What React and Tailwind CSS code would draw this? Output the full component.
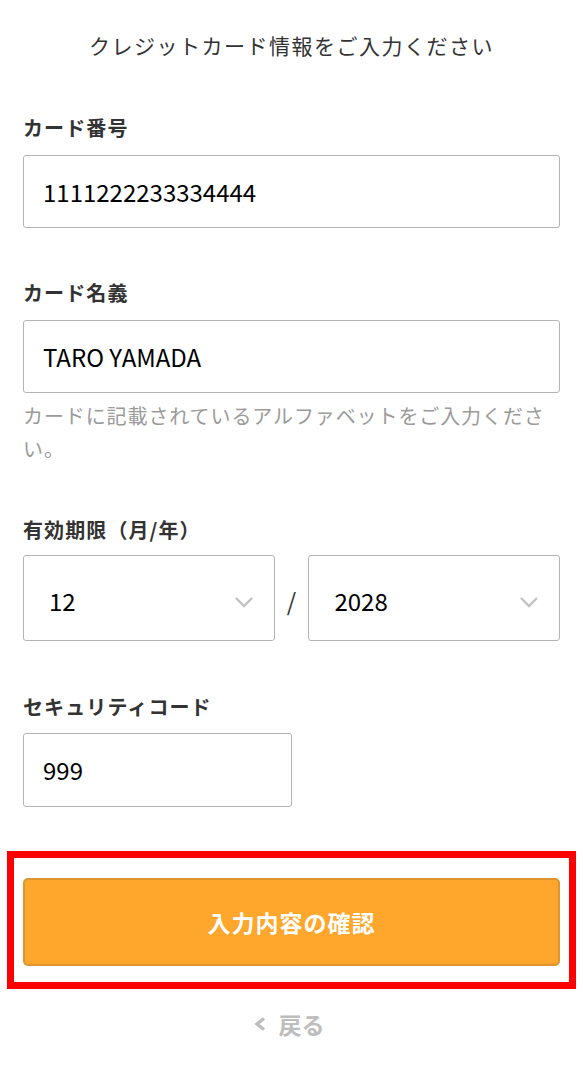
import React from "react";

const font = { fontFamily: '"Noto Sans CJK JP", "Noto Sans", sans-serif' };

function Chevron() {
  return (
    <svg width="20" height="12" viewBox="0 0 20 12" fill="none" className="shrink-0">
      <path d="M2 2 L10 10 L18 2" stroke="#c2c2c2" strokeWidth="2.4" />
    </svg>
  );
}

function Label({ children }) {
  return (
    <div className="text-[20px] leading-[30px] font-bold text-[#333] tracking-[1.1px]">{children}</div>
  );
}

function Box({ children, className = "" }) {
  return (
    <div
      className={
        "flex items-center border border-[#b4b4b4] rounded-[3px] bg-white text-[24px] text-black " +
        className
      }
    >
      {children}
    </div>
  );
}

export default function App() {
  return (
    <div className="w-[583px] min-h-[1083px] bg-white" style={font}>
      <div className="px-[23px]">
        <h1 className="pt-[30px] text-center text-[21px] leading-[30px] tracking-[1.5px] text-[#333] font-normal">
          クレジットカード情報をご入力ください
        </h1>

        <div className="mt-[53px]">
          <Label>カード番号</Label>
          <Box className="mt-[12px] h-[73px] pl-[19px]">1111222233334444</Box>
        </div>

        <div className="mt-[50px]">
          <Label>カード名義</Label>
          <Box className="mt-[12px] h-[73px] pl-[19px]">TARO YAMADA</Box>
          <p className="mt-[6px] text-[20px] leading-[33px] tracking-[0.9px] text-[#9a9a9a]">
            カードに記載されているアルファベットをご入力ください。
          </p>
        </div>

        <div className="mt-[50px]">
          <Label>有効期限（月/年）</Label>
          <div className="mt-[10px] flex items-center">
            <Box className="h-[86px] w-[252px] pl-[25px] pr-[20px] justify-between">
              <span className="pt-[6px]">12</span>
              <span className="pt-[8px]"><Chevron /></span>
            </Box>
            <div className="w-[34px] text-center text-[24px] text-[#333] pt-[6px]">/</div>
            <Box className="h-[86px] w-[252px] pl-[25px] pr-[20px] justify-between">
              <span className="pt-[6px]">2028</span>
              <span className="pt-[8px]"><Chevron /></span>
            </Box>
          </div>
        </div>

        <div className="mt-[51px]">
          <Label>セキュリティコード</Label>
          <Box className="mt-[11px] h-[74px] w-[269px] pl-[19px]">999</Box>
        </div>
      </div>

      <div className="mt-[44px] mx-[7px] border-[7px] border-[#ff0000] pt-[20px] pb-[16px] px-[9px]">
        <button className="w-full h-[88px] rounded-[5px] bg-[#ffa72d] border-2 border-[#df952f] text-white text-[23px] font-bold tracking-[1px]">
          入力内容の確認
        </button>
      </div>

      <div className="mt-[20px] flex items-center justify-center gap-[12px] text-[#bdbdbd] text-[23px] font-bold leading-[30px] pr-[6px]">
        <svg width="14" height="16" viewBox="0 0 14 16" fill="none">
          <path d="M11 2.5 L4 8 L11 13.5" stroke="#bdbdbd" strokeWidth="3.4" />
        </svg>
        <span>戻る</span>
      </div>
    </div>
  );
}
